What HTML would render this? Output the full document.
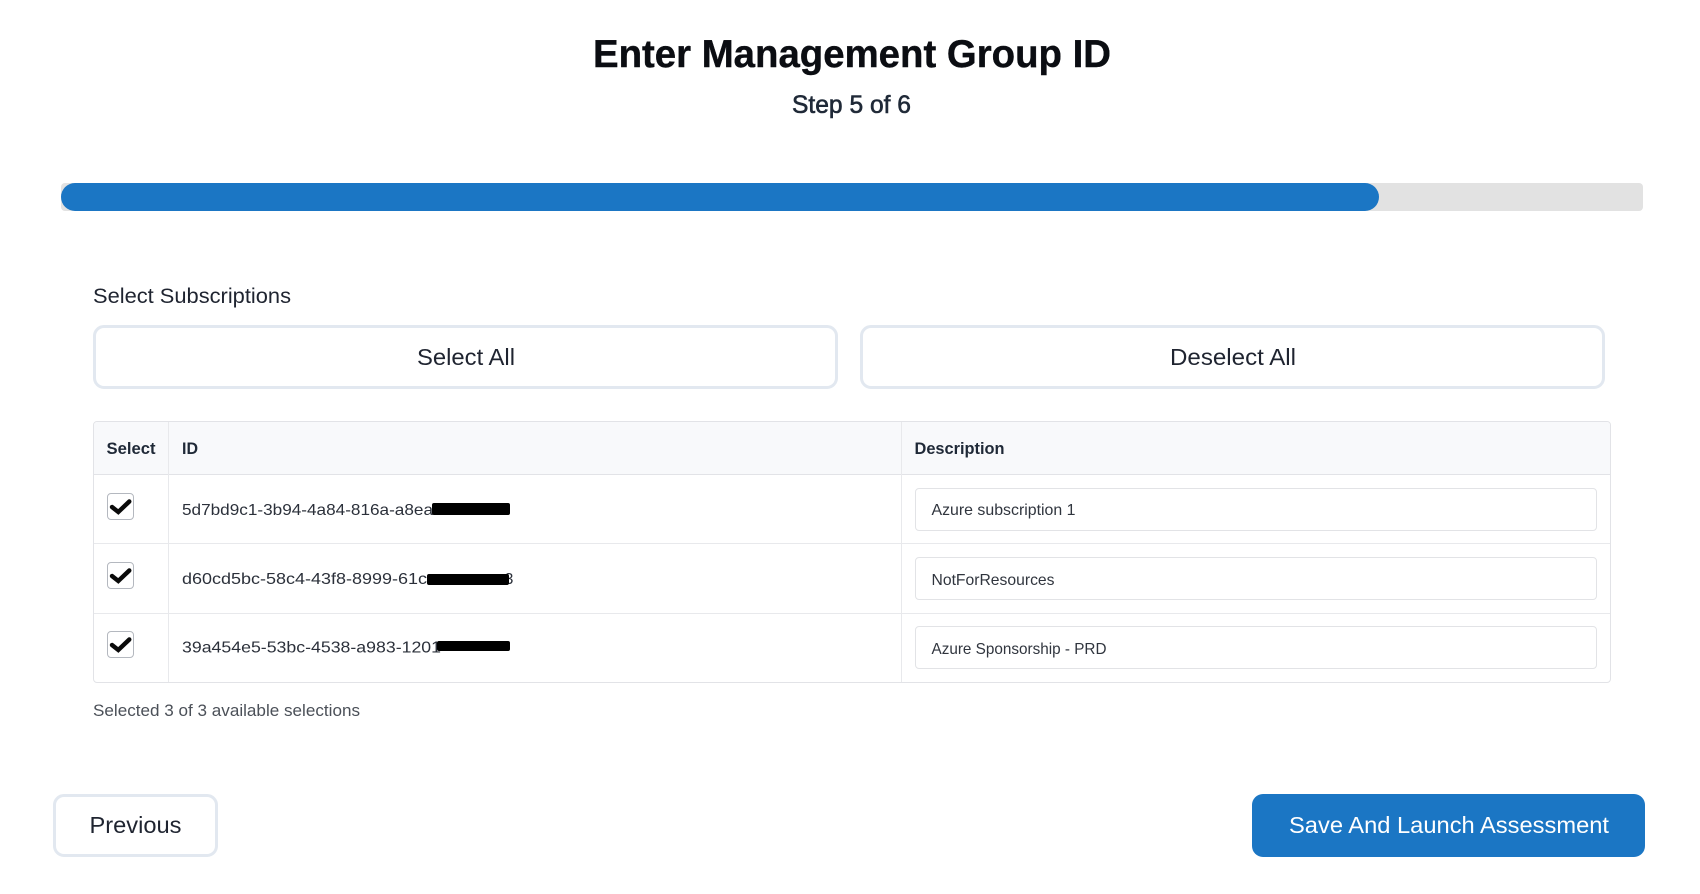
<!DOCTYPE html>
<html lang="en">
<head>
<meta charset="utf-8">
<title>Enter Management Group ID</title>
<style>
html,body{margin:0;padding:0;background:#fff;width:1700px;height:894px;overflow:hidden}
.b{position:absolute;box-sizing:border-box}
.btn{border:3px solid #e2e8f0;border-radius:11px;background:#fff}
.cb{left:107px;width:27px;height:27px;border:1px solid #b4b8bf;border-radius:4px;background:#fff}
.inp{left:915px;width:682px;height:43px;border:1px solid #e2e3e6;border-radius:4px;background:#fff}
.h{background:#e8e9ec}
svg{position:absolute;left:0;top:0}
text{font-family:"Liberation Sans",Arial,sans-serif}
</style>
</head>
<body>
<div class="b" style="left:61px;top:183px;width:1582px;height:28px;background:#e2e2e2;border-radius:4px"></div>
<div class="b" style="left:61px;top:183px;width:1318px;height:28px;background:#1b76c4;border-radius:14px"></div>

<div class="b btn" style="left:93px;top:325px;width:745px;height:64px"></div>
<div class="b btn" style="left:860px;top:325px;width:745px;height:64px"></div>

<div class="b" style="left:93px;top:421px;width:1518px;height:262px;border:1px solid #e2e3e7;border-radius:4px;overflow:hidden;background:#fff">
  <div class="b" style="left:0;top:0;width:100%;height:53px;background:#f8f9fb"></div>
  <div class="b h" style="left:0;top:52px;width:100%;height:1px;background:#e2e3e7"></div>
  <div class="b h" style="left:0;top:121px;width:100%;height:1px"></div>
  <div class="b h" style="left:0;top:191px;width:100%;height:1px"></div>
  <div class="b h" style="left:74px;top:0;width:1px;height:100%"></div>
  <div class="b h" style="left:807px;top:0;width:1px;height:100%"></div>
</div>

<div class="b cb" style="top:493px"></div>
<div class="b cb" style="top:562px"></div>
<div class="b cb" style="top:631px"></div>

<div class="b inp" style="top:488px"></div>
<div class="b inp" style="top:557px"></div>
<div class="b inp" style="top:626px"></div>

<div class="b btn" style="left:53px;top:794px;width:165px;height:63px"></div>
<div class="b" style="left:1252px;top:794px;width:393px;height:63px;background:#1b76c4;border-radius:11px"></div>

<svg width="1700" height="894" viewBox="0 0 1700 894" xmlns="http://www.w3.org/2000/svg">
  <text x="593" y="67" font-size="39" font-weight="700" fill="#0b0d12" stroke="#0b0d12" stroke-width=".4" textLength="518" lengthAdjust="spacingAndGlyphs">Enter Management Group ID</text>
  <text x="792" y="113" font-size="25" fill="#1f2937" stroke="#1f2937" stroke-width=".6" textLength="119" lengthAdjust="spacingAndGlyphs">Step 5 of 6</text>

  <text x="93" y="303" font-size="21" fill="#1f2430" textLength="198" lengthAdjust="spacingAndGlyphs">Select Subscriptions</text>
  <text x="417" y="365" font-size="23" fill="#1f2430" textLength="98" lengthAdjust="spacingAndGlyphs">Select All</text>
  <text x="1170" y="365" font-size="23" fill="#1f2430" textLength="126" lengthAdjust="spacingAndGlyphs">Deselect All</text>

  <text x="106.500" y="454" font-size="17" font-weight="700" fill="#1f2937" textLength="49" lengthAdjust="spacingAndGlyphs">Select</text>
  <text x="182" y="454" font-size="17" font-weight="700" fill="#1f2937" textLength="16" lengthAdjust="spacingAndGlyphs">ID</text>
  <text x="914.500" y="454" font-size="17" font-weight="700" fill="#1f2937" textLength="90" lengthAdjust="spacingAndGlyphs">Description</text>

  <text x="182" y="515" font-size="16" fill="#2b303a" textLength="251" lengthAdjust="spacingAndGlyphs">5d7bd9c1-3b94-4a84-816a-a8ea</text>
  <text x="182" y="584" font-size="16" fill="#2b303a" textLength="245" lengthAdjust="spacingAndGlyphs">d60cd5bc-58c4-43f8-8999-61c</text>
  <text x="504.500" y="584" font-size="16" fill="#2b303a">3</text>
  <text x="182" y="652.500" font-size="16" fill="#2b303a" textLength="259" lengthAdjust="spacingAndGlyphs">39a454e5-53bc-4538-a983-1201</text>

  <text x="931.500" y="515" font-size="16" fill="#30353e" textLength="144" lengthAdjust="spacingAndGlyphs">Azure subscription 1</text>
  <text x="931.500" y="585" font-size="16" fill="#30353e" textLength="123" lengthAdjust="spacingAndGlyphs">NotForResources</text>
  <text x="931.500" y="654" font-size="16" fill="#30353e" textLength="175" lengthAdjust="spacingAndGlyphs">Azure Sponsorship - PRD</text>

  <text x="93" y="716" font-size="17" fill="#4b5058" textLength="267" lengthAdjust="spacingAndGlyphs">Selected 3 of 3 available selections</text>
  <text x="89.500" y="833" font-size="23" fill="#1f2430" textLength="92" lengthAdjust="spacingAndGlyphs">Previous</text>
  <text x="1289" y="833" font-size="23" fill="#ffffff" textLength="320" lengthAdjust="spacingAndGlyphs">Save And Launch Assessment</text>

  <g fill="none" stroke="#0a0a0a" stroke-width="4.400" stroke-linecap="round" stroke-linejoin="miter">
    <path d="M112 507l6.300 5 11-10.500"/>
    <path d="M112 576l6.300 5 11-10.500"/>
    <path d="M112 645l6.300 5 11-10.500"/>
  </g>
  <rect x="432" y="503" width="78" height="12" rx="2" fill="#000"/>
  <rect x="427" y="574" width="82" height="11" rx="2" fill="#000"/>
  <rect x="437" y="641" width="73" height="10" rx="2" fill="#000"/>
</svg>
</body>
</html>
